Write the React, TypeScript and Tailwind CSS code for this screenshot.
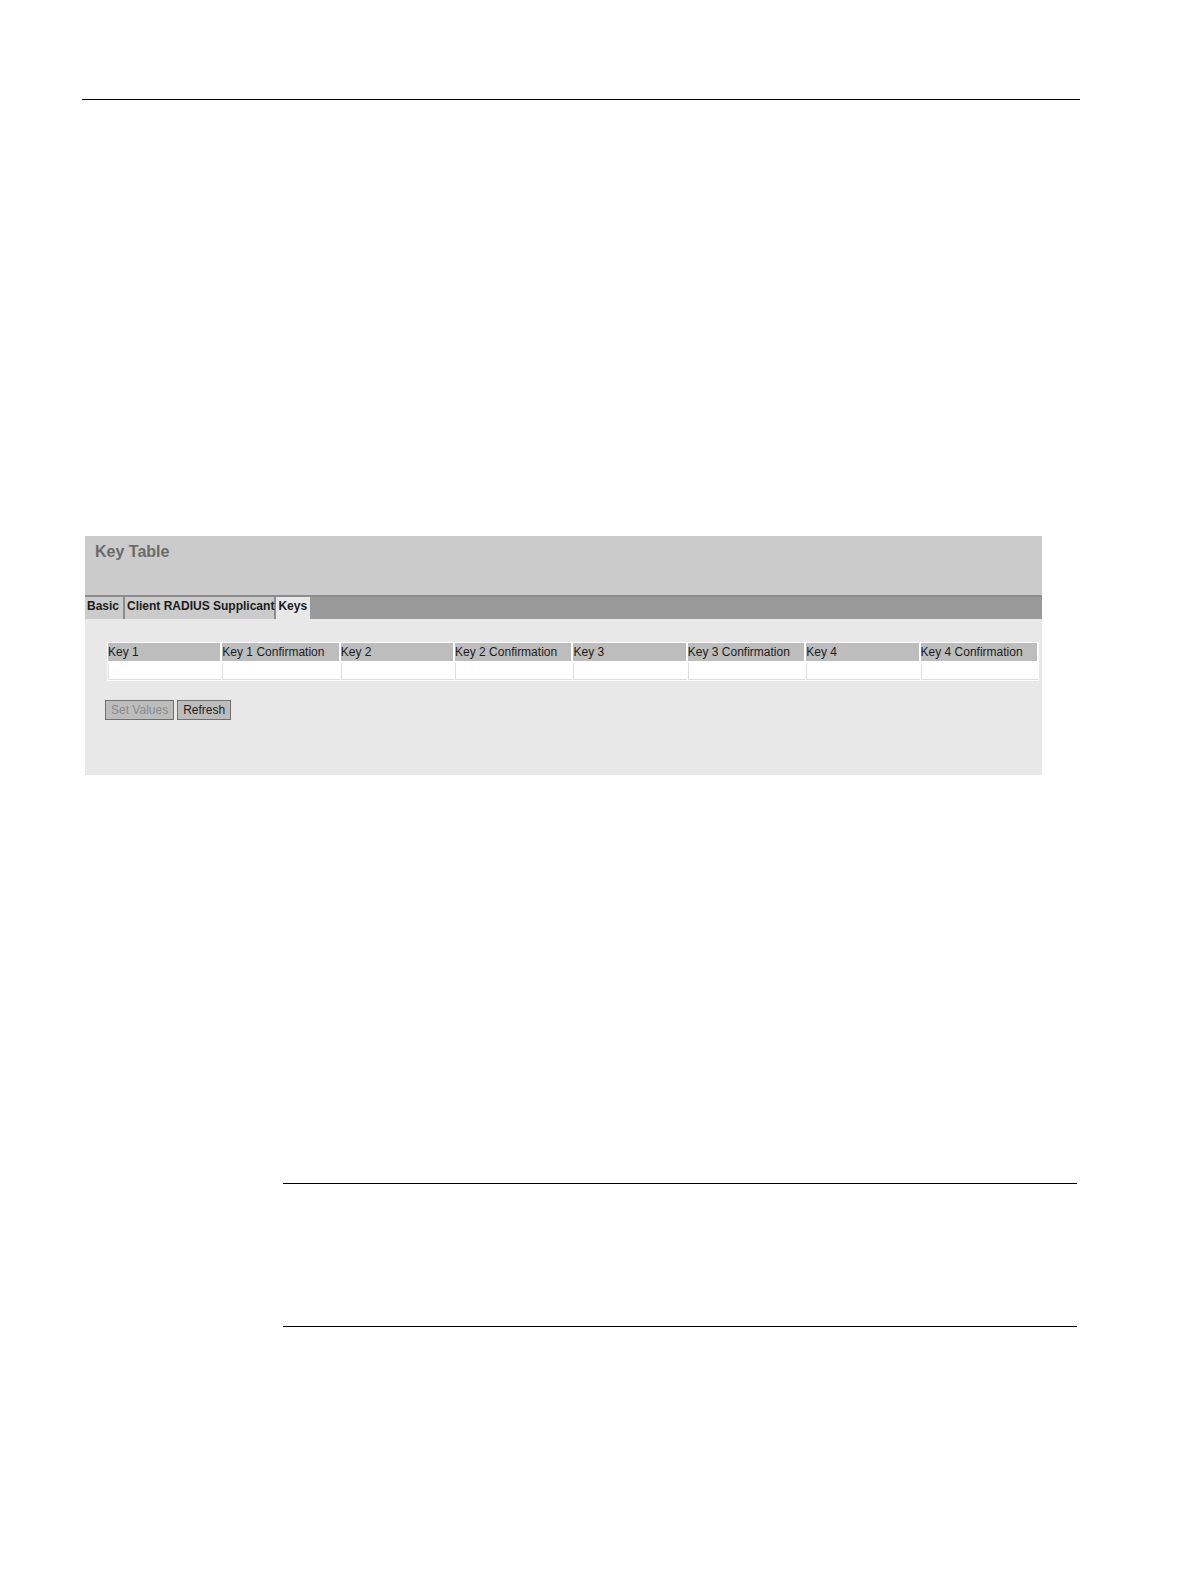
import { useState } from "react";

const keys = [1, 2, 3, 4];

export default function App() {
  const [values, setValues] = useState<Record<string, string>>({});
  const edited = Object.values(values).some((value) => value !== "");

  const fields = keys.flatMap((key) => [`Key ${key}`, `Key ${key} Confirmation`]);

  return (
    <div className="bg-white pt-[99px] pb-[260px] pl-[82px] font-['Liberation_Sans',Arial,sans-serif] text-[#1c1c1c]">
      <hr className="mr-[111px] border-t border-black" />

      <main className="mt-[436px] mr-[149px] ml-[3px] bg-[#e8e8e8] pb-[55px]">
        <header className="h-[59px] bg-[#cbcbcb] px-[10px] pt-[6px]">
          <h1 className="text-[16px] leading-5 font-bold text-[#6a6a6a]">Key Table</h1>
        </header>

        <nav className="flex h-6 border-t-2 border-[#8c8c8c] bg-[#999999] text-[12px] leading-[18px] font-bold">
          <a href="#basic" className="border-r-2 border-[#8c8c8c] bg-[#cbcbcb] pr-1 pl-[2px]">
            Basic
          </a>
          <a href="#supplicant" className="border-r-2 border-[#8c8c8c] bg-[#cbcbcb] pl-[2px]">
            Client RADIUS Supplicant
          </a>
          <a href="#keys" aria-current="page" className="bg-[#e8e8e8] pr-[3px] pl-[2px]">
            Keys
          </a>
        </nav>

        <form className="pt-[23px] pr-[3px] pl-[20px]" onSubmit={(event) => event.preventDefault()}>
          <div className="pl-[2px]">
            <table className="w-full table-fixed border-separate border-spacing-px bg-white text-[12px]">
              <colgroup>
                {fields.map((name, index) => (
                  <col key={name} className={index % 2 ? "w-[117px]" : "w-[113px]"} />
                ))}
              </colgroup>
              <thead>
                <tr>
                  {fields.map((name) => (
                    <th
                      key={name}
                      scope="col"
                      className="h-[19px] border-r border-b border-white bg-[#bdbdbd] p-0 text-left leading-4 font-normal whitespace-nowrap"
                    >
                      {name}
                    </th>
                  ))}
                </tr>
              </thead>
              <tbody>
                <tr>
                  {fields.map((name) => (
                    <td key={name} className="border-b border-l border-[#dedede] p-0">
                      <input
                        type="password"
                        aria-label={name}
                        value={values[name] ?? ""}
                        onChange={(event) => setValues({ ...values, [name]: event.target.value })}
                        className="block h-4 w-full bg-white px-[2px] outline-none"
                      />
                    </td>
                  ))}
                </tr>
              </tbody>
            </table>
          </div>

          <div className="mt-[19px] flex gap-[3px] text-[12px] leading-4">
            <button
              type="submit"
              disabled={!edited}
              className="h-5 border border-[#707070] bg-[#bdbdbd] px-[5px] disabled:text-[#8a8a8a]"
            >
              Set Values
            </button>
            <button
              type="button"
              onClick={() => setValues({})}
              className="h-5 border border-[#707070] bg-[#bdbdbd] px-[5px]"
            >
              Refresh
            </button>
          </div>
        </form>
      </main>

      <section className="mt-[408px] mr-[114px] ml-[201px] h-36 border-y border-black" />
    </div>
  );
}
